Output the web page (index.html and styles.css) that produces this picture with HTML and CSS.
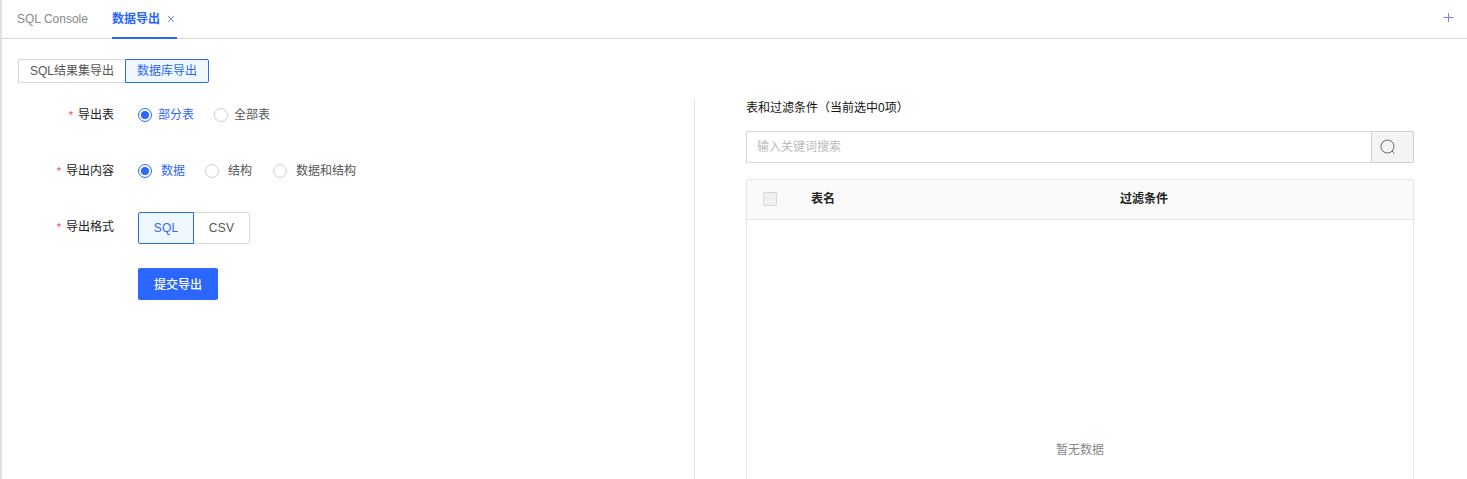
FILE: index.html
```html
<!DOCTYPE html>
<html lang="zh-CN">
<head>
<meta charset="utf-8">
<title>数据导出</title>
<link rel="stylesheet" href="styles.css">
</head>
<body>
<div class="app">
  <header class="tabs">
    <div class="tab">SQL Console</div>
    <div class="tab tab-active">数据导出<svg class="close" viewBox="0 0 8 8"><path d="M1 1l6 6M7 1l-6 6"/></svg></div>
    <svg class="add" viewBox="0 0 11 11"><path d="M5.5 1v9M.5 5.5h10"/></svg>
  </header>
  <nav class="segments segments-small">
    <span class="segment seg-result">SQL结果集导出</span><span class="segment seg-db selected">数据库导出</span>
  </nav>
  <main class="content">
    <section class="form">
      <div class="row">
        <label class="label"><i>*</i>导出表</label>
        <div class="radios">
          <span class="radio checked"><b></b>部分表</span>
          <span class="radio"><b></b>全部表</span>
        </div>
      </div>
      <div class="row">
        <label class="label"><i>*</i>导出内容</label>
        <div class="radios radios-wide">
          <span class="radio checked"><b></b>数据</span>
          <span class="radio"><b></b>结构</span>
          <span class="radio"><b></b>数据和结构</span>
        </div>
      </div>
      <div class="row">
        <label class="label">
          <i>*</i>导出格式</label>
        <div class="segments segments-format">
          <span class="segment selected">SQL</span><span class="segment">CSV</span>
        </div>
      </div>
      <div class="row actions"><button class="submit">提交导出</button></div>
    </section>
    <section class="panel">
      <h2 class="title">表和过滤条件（当前选中0项）</h2>
      <div class="search">
        <div class="search-input">输入关键词搜索</div>
        <div class="search-button"><svg viewBox="0 0 16 16"><circle cx="7.5" cy="7.5" r="6.5"/><path d="M11.8 11.8l2.7 2.7"/></svg></div>
      </div>
      <div class="table">
        <div class="thead"><span class="checkbox"></span><span class="col-name">表名</span><span class="col-filter">过滤条件</span></div>
        <div class="empty">暂无数据</div>
      </div>
    </section>
  </main>
</div>
</body>
</html>
```
FILE: styles.css
```css
* { box-sizing: border-box; }
body {
  margin: 0;
  overflow: hidden;
  background: #fff;
  color: #222;
  font: 12px/18px "Liberation Sans", "Noto Sans CJK SC", sans-serif;
}
.app {
  height: 479px;
  border-left: 2px solid #e0e0e0;
  display: flex;
  flex-direction: column;
}
.tabs {
  height: 39px;
  flex: none;
  display: flex;
  padding: 0 13px 0 15px;
  border-bottom: 1px solid #d9d9d9;
}
.tab {
  height: 39px;
  line-height: 39px;
  width: 95px;
  color: #888;
}
.tab-active {
  width: 65px;
  color: #2b66ff;
  font-weight: 700;
  border-bottom: 2px solid #2b66ff;
}
.close { width: 8px; height: 8px; margin-left: 7px; vertical-align: 0; }
.close path { stroke: #7d8bf5; fill: none; }
.add { width: 11px; height: 11px; margin: 12px 0 0 auto; }
.add path { stroke: #8c78ec; fill: none; }

.segments { display: flex; }
.segment {
  border: 1px solid #d9d9d9;
  text-align: center;
  color: #555;
}
.segment:first-child { border-right: 0; border-radius: 2px 0 0 2px; }
.segment:last-child { border-left: 0; border-radius: 0 2px 2px 0; }
.segment.selected {
  border: 1px solid #2b66ff;
  background: #f0f8ff;
  color: #2b66ff;
}
.segments-small { margin: 20px 0 0 16px; flex: none; }
.segments-small .segment { height: 24px; line-height: 22px; }
.seg-result { width: 107px; }
.seg-db { width: 84px; }
.segments-format .segment { width: 56px; height: 32px; line-height: 30px; letter-spacing: .2px; }

.content { flex: 1; min-height: 0; display: flex; padding-top: 16px; }
.form { width: 693px; border-right: 1px solid #e4e4e4; }
.row { height: 56px; display: flex; }
.segments-format { padding-top: 1px; }
.label { width: 112px; margin-right: 24px; line-height: 32px; text-align: right; color: #222; }
.label i { color: #ff4050; font-size: 11px; font-style: normal; margin-right: 5px; }
.radios { display: flex; gap: 20px; height: 32px; line-height: 32px; }
.radio { display: flex; align-items: center; gap: 6px; color: #555; }
.radio b {
  width: 14px;
  height: 14px;
  border: 1px solid #d0d0d0;
  border-radius: 50%;
  display: grid;
  place-items: center;
}
.radios-wide .radio { gap: 9px; }
.radios-wide .radio:last-child { margin-left: 1px; }
.radio.checked { color: #2b66ff; }
.radio.checked b { border-color: #2b66ff; }
.radio.checked b::after { content: ""; width: 8px; height: 8px; border-radius: 50%; background: #2b66ff; }
.actions { padding: 1px 0 0 136px; }
.submit {
  width: 80px;
  height: 32px;
  padding: 0 0 2px;
  border: 0;
  border-radius: 2px;
  background: #2b66ff;
  color: #fff;
  font: 500 12px "Liberation Sans", "Noto Sans CJK SC", sans-serif;
}

.panel { width: 668px; margin-left: 51px; display: flex; flex-direction: column; }
.title { margin: 0 0 14px; font-size: 12px; line-height: 18px; font-weight: 400; color: #111; }
.search { height: 32px; flex: none; display: flex; margin-bottom: 16px; }
.search-input {
  flex: 1;
  padding-left: 10px;
  line-height: 30px;
  border: 1px solid #d9d9d9;
  border-right: 0;
  border-radius: 2px 0 0 2px;
  color: #bbb;
}
.search-button {
  width: 43px;
  padding: 7px 0 0 8px;
  background: #f4f4f4;
  border: 1px solid #d0d0d0;
  border-radius: 0 2px 2px 0;
}
.search-button svg { display: block; width: 16px; height: 16px; fill: none; stroke: #666c7c; stroke-width: 1; }
.table { flex: 1; min-height: 0; border: 1px solid #e6e6e6; border-bottom: 0; border-radius: 2px 2px 0 0; }
.thead {
  height: 40px;
  display: flex;
  align-items: center;
  padding: 0 0 1px 16px;
  background: #fafafa;
  border-bottom: 1px solid #e6e6e6;
  font-weight: 700;
}
.checkbox { width: 14px; height: 14px; border: 1px solid #d5d5d5; border-radius: 2px; background: #f0f0f0; }
.col-name { width: 309px; margin-left: 34px; }
.empty { padding-top: 221px; text-align: center; color: #888; }
```
